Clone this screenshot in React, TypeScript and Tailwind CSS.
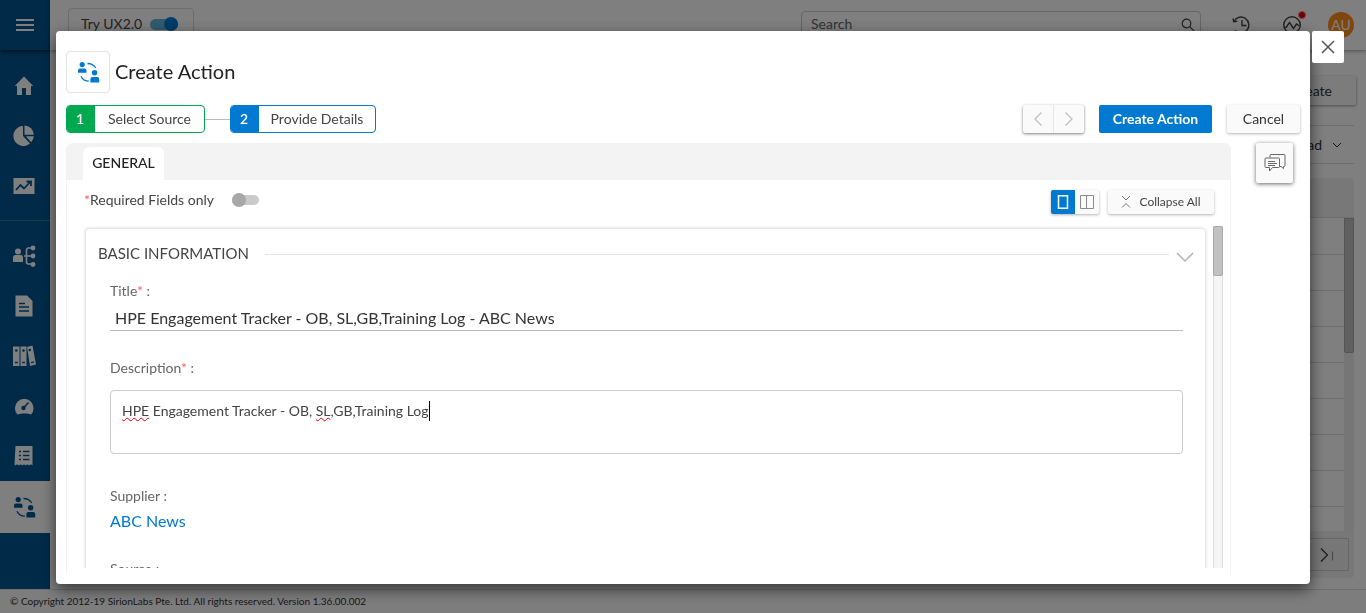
import React from "react";

type IconProps = { className?: string };

function PeopleSwapIcon({ className = "" }: IconProps) {
  return (
    <svg viewBox="0 0 24 24" className={className} fill="currentColor" aria-hidden="true">
      <circle cx="6.2" cy="4.600" r="2.600" />
      <path d="M2 12.700v-2.200a2 2 0 0 1 2-2h4.500a2 2 0 0 1 2 2v2.200z" />
      <circle cx="18.600" cy="12.800" r="2.700" />
      <path d="M14.400 22.500v-3.500a2 2 0 0 1 2-2h4.800a2 2 0 0 1 2 2v3.500z" />
      <path d="M11.500 3.500c3.600 0 6.300 1.300 8.300 4.500M5 16.200c1.600 3.400 4.200 4.900 7.800 5" fill="none" stroke="currentColor" strokeWidth="1.300" />
    </svg>
  );
}

function HomeIcon() {
  return (
    <svg viewBox="0 0 24 24" className="size-6" fill="currentColor" aria-hidden="true">
      <path d="M12 2.500 2.800 12H5v9h5v-7h4v7h5v-9h2.200z" />
    </svg>
  );
}
function PieIcon() {
  return (
    <svg viewBox="0 0 24 24" className="size-6" fill="currentColor" aria-hidden="true">
      <path d="M11 2v10l7 7.500A10 10 0 1 1 11 2z" />
      <path d="M12.500 1.500a9.800 9.800 0 0 1 9.300 9.300h-9.300z" />
      <path d="M13.800 12.300h8a9.800 9.800 0 0 1-2.600 6z" />
    </svg>
  );
}
function TrendIcon() {
  return (
    <svg viewBox="0 0 24 24" className="size-6" aria-hidden="true">
      <path fill="currentColor" d="M1.500 4h21v16h-21z" />
      <path d="M4 16l4.500-5 3.500 3.500 6.500-7M14.500 7.500h4.500v4.500" fill="none" stroke="#005591" strokeWidth="1.800" />
    </svg>
  );
}
function HierarchyIcon() {
  return (
    <svg viewBox="0 0 24 24" className="size-6" fill="currentColor" aria-hidden="true">
      <circle cx="6" cy="7.500" r="3" />
      <path d="M1 18v-4.500a2.500 2.500 0 0 1 2.500-2.500h5a2.500 2.500 0 0 1 2.500 2.500V18z" />
      <path d="M12 12h8M20 4h-3.500a2 2 0 0 0-2 2v12a2 2 0 0 0 2 2H20" fill="none" stroke="currentColor" strokeWidth="1.600" />
      <circle cx="21" cy="4" r="2.400" />
      <circle cx="21" cy="12" r="2.400" />
      <circle cx="21" cy="20.500" r="2.400" />
    </svg>
  );
}
function DocumentIcon() {
  return (
    <svg viewBox="0 0 24 24" className="size-6" aria-hidden="true">
      <path fill="currentColor" d="M3.500 1.500h11.500l5.500 5.500v15.500h-17z" />
      <path d="M7 9.500h6M7 13h10M7 17h10" stroke="#005591" strokeWidth="1.400" />
    </svg>
  );
}
function BindersIcon() {
  return (
    <svg viewBox="0 0 24 24" className="size-6" aria-hidden="true">
      <path fill="currentColor" d="M1 2.500h6.500v19.500H1zM8.500 2.500h6v19.500h-6zM15 3l5.500-1.500 3.500 19-6 1.500z" />
      <path d="M3 18.500h2.800M10.200 18.500h2.800M19 18.700l3-.8" stroke="#005591" strokeWidth="1.300" />
      <circle cx="4.300" cy="6.500" r="1.300" fill="#005591" />
      <circle cx="11.500" cy="6.500" r="1.300" fill="#005591" />
      <circle cx="17.800" cy="6" r="1.300" fill="#005591" />
    </svg>
  );
}
function GaugeIcon() {
  return (
    <svg viewBox="0 0 24 24" className="size-6" aria-hidden="true">
      <path fill="currentColor" d="M5.500 20.500A9.300 9.300 0 1 1 19 20.500c-2-1.500-11-1.500-13.500 0z" />
      <circle cx="11.500" cy="14" r="2.200" fill="#005591" />
      <path d="M11.500 14l5-5.500" stroke="#005591" strokeWidth="1.600" />
    </svg>
  );
}
function InvoiceIcon() {
  return (
    <svg viewBox="0 0 24 24" className="size-6" aria-hidden="true">
      <path fill="currentColor" d="M3.500 2h17v19.500l-1.700-1.200-1.700 1.200-1.700-1.200-1.700 1.200-1.700-1.200-1.700 1.200-1.700-1.200-1.700 1.200-1.700-1.200-1.700 1.200-1-1.200z" />
      <path d="M7 7.500h2M11 7.500h6.500M7 11.500h2M11 11.500h6.500M7 15.500h2M11 15.500h6.500" stroke="#005591" strokeWidth="1.400" />
    </svg>
  );
}

const topItems = [
  { label: "Home", icon: <HomeIcon /> },
  { label: "Dashboards", icon: <PieIcon /> },
  { label: "Analytics", icon: <TrendIcon /> },
];
const entityItems = [
  { label: "Suppliers", icon: <HierarchyIcon /> },
  { label: "Contracts", icon: <DocumentIcon /> },
  { label: "Library", icon: <BindersIcon /> },
  { label: "Performance", icon: <GaugeIcon /> },
  { label: "Invoices", icon: <InvoiceIcon /> },
];

function Sidebar() {
  return (
    <nav className="flex w-[50px] shrink-0 flex-col bg-[#005591] text-white">
      <button aria-label="Menu" className="flex h-[50px] shrink-0 items-center justify-center shadow-[0_2px_4px_rgba(0,0,0,0.5)]">
        <svg viewBox="0 0 18 14" className="h-3.5 w-[18px]" aria-hidden="true">
          <path d="M0 2h18M0 7h18M0 12h18" stroke="currentColor" strokeWidth="2" />
        </svg>
      </button>
      <div className="flex flex-col border-b border-[#33779f] pt-[11px] pb-[9px]">
        {topItems.map((item) => (
          <a key={item.label} href="#" aria-label={item.label} className="flex h-[50px] items-center justify-center pr-0.5">
            {item.icon}
          </a>
        ))}
      </div>
      <div className="flex flex-col pt-2.5">
        {entityItems.map((item) => (
          <a key={item.label} href="#" aria-label={item.label} className="flex h-[50px] items-center justify-center pr-0.5">
            {item.icon}
          </a>
        ))}
        <a href="#" aria-label="Actions" className="flex h-[52px] items-center justify-center bg-white pr-0.5 text-[#005591]">
          <PeopleSwapIcon className="size-6" />
        </a>
      </div>
    </nav>
  );
}

function PageHeader() {
  return (
    <header className="z-10 flex h-[50px] shrink-0 items-start bg-white shadow-[0_1px_4px_rgba(0,0,0,0.4)]">
      <label className="mt-2 ml-[18px] flex h-8 w-[126px] items-center gap-2 rounded border border-[#d9d9d9] pl-3 text-sm whitespace-nowrap text-[#444]">
        Try UX2.0
        <input type="checkbox" className="sr-only" defaultChecked />
        <span className="flex h-[11px] w-7 items-center justify-end rounded-full bg-[#62b7dd]">
          <span className="size-3.5 rounded-full bg-[#007ad1]" />
        </span>
      </label>
      <div className="mt-[11px] ml-auto flex h-8 w-[400px] items-start rounded border border-[#ccc] px-[9px] pt-0.5">
        <input type="search" aria-label="Search" placeholder="Search" className="h-5 min-w-0 flex-1 text-sm outline-none placeholder:text-[#666]" />
        <svg viewBox="0 0 14 14" className="mt-1 mr-[-4px] size-3.5" fill="none" stroke="#444" strokeWidth="1.200" aria-hidden="true">
          <circle cx="5.500" cy="5.500" r="4.300" />
          <path d="M8.700 8.700l4.500 4.500" />
        </svg>
      </div>
      <button aria-label="History" className="mt-[15px] ml-[30px] text-[#444]">
        <svg viewBox="0 0 20 20" className="size-5" fill="none" stroke="currentColor" strokeWidth="1.400" aria-hidden="true">
          <path d="M3 6A8 8 0 1 1 4 15.500M2 3.500l.7 3.300 3.600-.6M11 5v5.500h4.500" />
        </svg>
      </button>
      <button aria-label="Activity" className="relative mt-[15px] ml-[31px] text-[#444]">
        <svg viewBox="0 0 20 20" className="size-5" fill="none" stroke="currentColor" strokeWidth="1.400" aria-hidden="true">
          <circle cx="10" cy="10" r="8.300" />
          <path d="M2 12.500h2l3.500-5 4 6 3-4.500 3 2" />
        </svg>
        <span className="absolute -top-1 -right-1 size-2 rounded-full border border-[#ff8080] bg-[#e60000]" />
      </button>
      <span className="mt-3 mr-3 ml-[26px] flex size-[26px] items-center justify-center rounded-full bg-[#ff8c1a] text-sm text-white">AU</span>
    </header>
  );
}

const backgroundRows = ["r1", "r2", "r3", "r4", "r5", "r6", "r7", "r8"];

function ListingPage() {
  return (
    <main className="flex min-h-0 flex-1 flex-col bg-white pr-3 pb-[11px] pl-3 text-sm text-[#333]">
      <div className="flex h-[76px] shrink-0 items-start justify-end border-b border-[#ddd] pt-[26px]">
        <button className="-mr-0.5 h-[29px] rounded-xs bg-[#f8f8f8] px-6 shadow-[0_1px_3px_rgba(0,0,0,0.4)]">Create</button>
      </div>
      <div className="flex h-[38px] shrink-0 items-center justify-end border-b border-[#ddd] pr-3">
        <button className="flex items-center gap-2.5">
          Download
          <svg viewBox="0 0 10 6" className="h-1.5 w-2.5" fill="none" stroke="currentColor" aria-hidden="true">
            <path d="M1 1l4 4 4-4" />
          </svg>
        </button>
      </div>
      <div className="mt-3.5 flex min-h-0 flex-1 flex-col overflow-hidden rounded bg-[#f0f0f0]">
        <div className="h-10 shrink-0 border-b border-[#ddd]" />
        <div className="flex min-h-0 flex-1">
          <div className="flex-1 overflow-hidden bg-white pt-px">
            {backgroundRows.map((row) => (
              <div key={row} className="h-9 border-b border-[#dcdcdc]" />
            ))}
          </div>
          <div className="w-2.5 bg-[#ededed]">
            <div className="h-[135px] rounded-b-xs border border-[#aaa] bg-[#c1c1c1]" />
          </div>
        </div>
        <div className="flex h-[47px] shrink-0 items-start justify-end pt-[7px] pr-[5px]">
          <div className="flex h-[33px] items-center border border-[#ccc] px-[5px]">
            <button aria-label="Last page" className="flex h-6 w-8 items-center justify-center bg-[#eee]">
              <svg viewBox="0 0 16 16" className="size-4" fill="none" stroke="#333" strokeWidth="1.200" aria-hidden="true">
                <path d="M2 1.500l6.500 6.500L2 14.500" />
                <path d="M13.500 4.500v9" stroke="#999" />
              </svg>
            </button>
          </div>
        </div>
      </div>
    </main>
  );
}

function Chevron({ direction }: { direction: "left" | "right" }) {
  return (
    <svg viewBox="0 0 10 16" className="h-4 w-2.5" fill="none" stroke="#bdbdbd" strokeWidth="1.200" aria-hidden="true">
      <path d={direction === "left" ? "M8.500 1.500L2 8l6.500 6.500" : "M1.500 1.500L8 8l-6.500 6.500"} />
    </svg>
  );
}

function DialogHeader() {
  return (
    <>
      <div className="flex items-center gap-[5px]">
        <span className="flex h-[42px] w-11 items-center justify-center rounded border border-[#e3e3e3] text-[#007ad1]">
          <PeopleSwapIcon className="size-6" />
        </span>
        <h1 id="dialog-title" className="pb-0.5 text-xl text-[#222]">Create Action</h1>
      </div>
      <div className="mt-[11px] flex h-[30px] items-center">
        <ol className="flex items-center text-sm text-[#444]">
          <li className="flex h-7 w-[139px] overflow-hidden rounded border border-[#00a94f]">
            <span className="flex w-7 items-center justify-center bg-[#00a94f] pr-0.5 font-semibold text-white">1</span>
            <span className="flex flex-1 items-center justify-center">Select Source</span>
          </li>
          <li aria-hidden="true" className="h-px w-[25px] bg-[#bbb]" />
          <li className="flex h-7 w-[146px] overflow-hidden rounded border border-[#007ad1]">
            <span className="flex w-7 items-center justify-center bg-[#007ad1] pr-0.5 font-semibold text-white">2</span>
            <span className="flex flex-1 items-center justify-center">Provide Details</span>
          </li>
        </ol>
        <div className="ml-auto flex items-center gap-[15px] text-sm">
          <div className="flex h-7 w-[61px] rounded-xs bg-[#fafafa] shadow-[0_1px_3px_rgba(0,0,0,0.5)]">
            <button aria-label="Previous step" className="flex flex-1 items-center justify-center border-r border-[#e6e6e6]"><Chevron direction="left" /></button>
            <button aria-label="Next step" className="flex flex-1 items-center justify-center"><Chevron direction="right" /></button>
          </div>
          <button className="h-7 w-[113px] rounded-xs bg-[#007ad1] font-bold text-white">Create Action</button>
          <button className="h-7 w-[73px] rounded-xs bg-[#fafafa] text-[#333] shadow-[0_1px_3px_rgba(0,0,0,0.3)]">Cancel</button>
        </div>
      </div>
    </>
  );
}

function Toolbar() {
  return (
    <div className="flex h-[46px] items-center pr-4 pb-0.5 pl-[17px] text-sm text-[#444]">
      <label className="flex items-center gap-[18px] pb-1">
        <span><span className="text-[#ff5c5c]">*</span>Required Fields only</span>
        <input type="checkbox" className="sr-only" />
        <span className="flex h-2.5 w-[27px] items-center rounded-full bg-[#cacaca]">
          <span className="size-3.5 rounded-full bg-[#a8a8a8]" />
        </span>
      </label>
      <div className="ml-auto flex h-6 w-12 overflow-hidden rounded-xs bg-[#fafafa] shadow-[0_1px_3px_rgba(0,0,0,0.3)]">
        <button aria-label="Single column" className="flex flex-1 items-center justify-center bg-[#007ad1]">
          <svg viewBox="0 0 12 14" className="h-3.5 w-3" fill="none" stroke="#fff" strokeWidth="1.500" aria-hidden="true"><path d="M1.500.8h9v12.400h-9z" /></svg>
        </button>
        <button aria-label="Two columns" className="flex flex-1 items-center justify-center">
          <svg viewBox="0 0 14 14" className="size-3.5" fill="none" stroke="#8a8a8a" aria-hidden="true"><path d="M.5.5h13v13H.5zM6.500.5v13" /></svg>
        </button>
      </div>
      <button className="ml-[9px] flex h-6 w-[106px] items-center justify-center gap-2 rounded-xs bg-[#fafafa] text-xs shadow-[0_1px_3px_rgba(0,0,0,0.3)]">
        <svg viewBox="0 0 10 14" className="h-3.5 w-2.5" fill="none" stroke="#777" strokeWidth="1" aria-hidden="true"><path d="M1 1l4 4 4-4M1 12.500l4-4 4 4" /></svg>
        Collapse All
      </button>
    </div>
  );
}

function Required() {
  return <span className="text-[#ff5c5c]">*</span>;
}

function BasicInformation() {
  return (
    <section className="rounded-t border border-[#e6e6e6] pr-3 pl-3 shadow-[0_0_3px_rgba(0,0,0,0.15)]">
      <div className="flex h-12 items-center">
        <h2 className="text-[15px] leading-6 text-[#444]">BASIC INFORMATION</h2>
        <span className="mt-0.5 mr-2 ml-4 h-px flex-1 bg-[#e6e6e6]" />
        <button aria-label="Collapse section" className="mt-2 flex w-4 justify-center">
          <svg viewBox="0 0 18 10" className="h-2.5 w-[18px] shrink-0" fill="none" stroke="#b5b5b5" strokeWidth="1.500" aria-hidden="true"><path d="M1 1l8 8 8-8" /></svg>
        </button>
      </div>
      <div className="flex flex-col pr-2.5 pl-3 text-sm text-[#666]">
        <label htmlFor="title" className="mt-1 h-5 leading-5">Title<Required /> :</label>
        <input
          id="title"
          type="text"
          defaultValue="HPE Engagement Tracker - OB, SL,GB,Training Log - ABC News"
          className="mt-1.5 h-6 w-full border-b border-[#bbb] pb-0.5 pl-[5px] text-base text-[#333] outline-none"
        />
        <label htmlFor="description" className="mt-[27px] h-5 leading-5">Description<Required /> :</label>
        <div className="mt-3 grid h-16 rounded border border-[#ccc] text-sm leading-5 text-[#444]">
          <textarea
            id="description"
            spellCheck={false}
            defaultValue="HPE Engagement Tracker - OB, SL,GB,Training Log"
            className="col-start-1 row-start-1 resize-none px-[11px] py-2.5 outline-none"
          />
          <div aria-hidden="true" className="pointer-events-none col-start-1 row-start-1 flex items-start px-[11px] py-2.5 whitespace-pre text-transparent">
            <span className="underline decoration-red-600 decoration-wavy decoration-1">HPE</span>
            <span> Engagement Tracker - OB, </span>
            <span className="underline decoration-red-600 decoration-wavy decoration-1">SL</span>
            <span>,GB,Training Log</span>
            <span className="h-5 w-px bg-black" />
          </div>
        </div>
        <span className="mt-8 h-5 leading-5">Supplier :</span>
        <a href="#" className="mt-[3px] h-6 self-start text-base leading-6 text-[#007ad1]">ABC News</a>
        <span className="mt-[26px] h-5 leading-5">Source :</span>
      </div>
    </section>
  );
}

function CreateActionDialog() {
  return (
    <div role="dialog" aria-modal="true" aria-labelledby="dialog-title" className="relative flex min-w-0 flex-1 flex-col rounded bg-white px-2.5 pt-5 pb-2.5 shadow-[0_5px_15px_rgba(0,0,0,0.6)]">
      <DialogHeader />
      <div className="mt-[9px] flex min-h-0 flex-1">
        <div className="flex min-h-0 min-w-0 flex-1 flex-col rounded-t-md border-x border-[#f3f3f3]">
          <div className="flex h-[37px] shrink-0 items-end rounded-t-md bg-[#f3f3f3] pl-4">
            <button className="h-[33px] w-[81px] rounded-t-md bg-white pb-0.5 text-sm font-medium text-[#222]">GENERAL</button>
          </div>
          <Toolbar />
          <div className="mb-1.5 flex min-h-0 flex-1 overflow-hidden pr-[7px] pl-4">
            <div className="min-w-0 flex-1 overflow-hidden px-0.5 pt-0.5">
              <BasicInformation />
            </div>
            <div className="ml-[5px] w-2.5 border-x border-[#ddd] bg-[#f5f5f5]">
              <div className="-mx-px h-[50px] rounded-xs border border-[#aaa] bg-[#c1c1c1]" />
            </div>
          </div>
        </div>
        <div className="w-[69px] shrink-0 pl-[25px]">
          <button aria-label="Comments" className="flex h-10 w-[37px] items-center justify-center rounded-xs bg-[#fafafa] shadow-[0_1px_4px_rgba(0,0,0,0.6)]">
            <svg viewBox="0 0 22 20" className="h-5 w-[22px]" fill="#fafafa" stroke="#666" strokeWidth="1" aria-hidden="true">
              <path d="M6 4.500V2.500a1 1 0 0 1 1-1h13a1 1 0 0 1 1 1v10a1 1 0 0 1-1 1h-.5v2l-2.500-2h-3" />
              <path d="M2 5h12.500a1 1 0 0 1 1 1v7.500a1 1 0 0 1-1 1H8.500L5.500 18v-3.500H2a1 1 0 0 1-1-1V6a1 1 0 0 1 1-1z" />
              <path d="M4 8.500h7M4 10.500h9M4 12.500h7" />
            </svg>
          </button>
        </div>
      </div>
      <button aria-label="Close" className="absolute top-0 left-full ml-0.5 flex size-8 items-center justify-center rounded-xs bg-white">
        <svg viewBox="0 0 14 14" className="size-3.5" stroke="#555" strokeWidth="1.500" aria-hidden="true"><path d="M1 1l12 12M13 1L1 13" /></svg>
      </button>
    </div>
  );
}

export default function App() {
  return (
    <div className="flex h-screen flex-col font-['Lato',sans-serif]">
      <div className="flex min-h-0 flex-1">
        <Sidebar />
        <div className="flex min-w-0 flex-1 flex-col">
          <PageHeader />
          <ListingPage />
        </div>
      </div>
      <footer className="flex h-6 shrink-0 items-center border-t border-[#ddd] bg-[#fafafa] pl-2.5 text-[10px] text-[#333]">
        © Copyright 2012-19 SirionLabs Pte. Ltd. All rights reserved. Version 1.36.00.002
      </footer>
      <div className="fixed inset-0 z-20 flex bg-black/50 px-14 pt-[31px] pb-[29px]">
        <CreateActionDialog />
      </div>
    </div>
  );
}
